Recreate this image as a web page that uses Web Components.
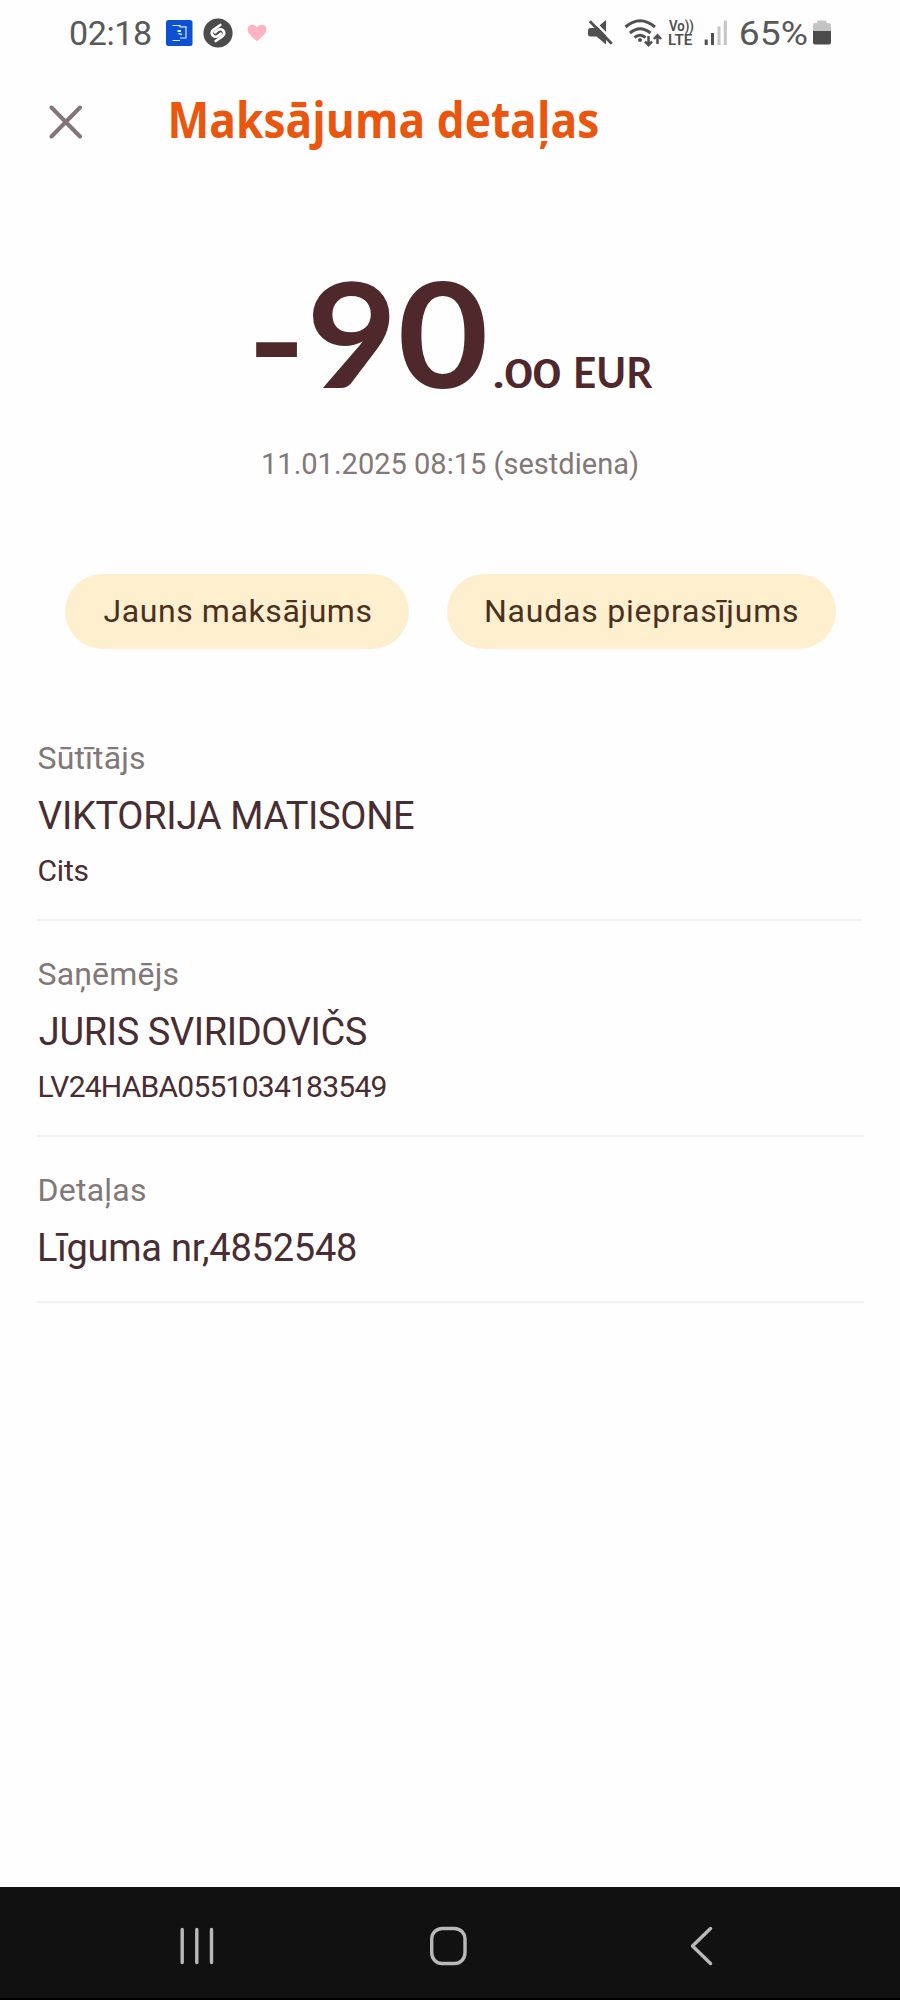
<!DOCTYPE html>
<html lang="lv">
<head>
<meta charset="utf-8">
<title>Maksājuma detaļas</title>
<style>
html,body{margin:0;padding:0;background:#fefefe}
body{width:900px;height:2000px;overflow:hidden;font-family:Roboto,"Noto Sans",sans-serif}
</style>
</head>
<body>
<payment-screen></payment-screen>
<script>
const ctx = document.createElement('canvas').getContext('2d');
const define = (name, html, setup) => customElements.define(name, class extends HTMLElement {
  connectedCallback() {
    if (this.shadowRoot) return;
    const t = document.createElement('template');
    t.innerHTML = html;
    this.attachShadow({mode:'open'}).append(t.content.cloneNode(true));
    if (setup) setup.call(this);
  }
});

// A line of text whose visible width equals the "w" attribute: with "stretch"
// the glyphs are scaled, otherwise letter spacing is used. "dx", "dy" nudge it.
define('fit-text', `<style>
:host{display:block;flex:none;white-space:pre}
span{display:inline-block;transform-origin:0 0;line-height:inherit}
</style><span><slot></slot></span>`, function () {
  const num = (n, d) => +(this.getAttribute(n) || d);
  const size = num('size'), w = num('w'), weight = num('weight', 400), dx = num('dx', 0), dy = num('dy', 0);
  const face = this.getAttribute('face') || 'Roboto';
  const stack = `"${face}","Noto Sans",sans-serif`;
  Object.assign(this.style, {width:w+'px', height:size+'px', lineHeight:size+'px', fontSize:size+'px', fontWeight:weight, fontFamily:stack});
  ctx.font = `${weight} ${size}px ${stack}`;
  const text = this.textContent, m = ctx.measureText(text);
  const ink = m.actualBoundingBoxLeft + m.actualBoundingBoxRight;
  const span = this.shadowRoot.querySelector('span');
  let k = 1;
  if (this.hasAttribute('stretch')) k = w / ink;
  else span.style.letterSpacing = (w - ink) / (text.length - 1) + 'px';
  span.style.transform = `translate(${m.actualBoundingBoxLeft*k + dx}px, ${dy}px) scaleX(${k})`;
});

define('status-bar', `<style>
:host{display:flex;height:66px;box-sizing:border-box;padding:0 69px 0 70px;align-items:center;color:#595959}
svg{display:block;flex:none}
.sp{flex:1}
.lte{display:grid;width:25px;margin:0 10px 0 7px;color:#505050;row-gap:0}
</style>
<fit-text size="34" w="81">02:18</fit-text>
<svg style="margin-left:9px" width="115" height="42" viewBox="160 12 115 42">
 <rect x="166" y="20" width="26.5" height="26" rx="2.5" fill="#0c50d4"/>
 <path d="M172.5 25.500h7.500v1.300h6V38h-6M172.500 40.500h7.500" fill="none" stroke="#dbeaff" stroke-width="1.200"/>
 <path d="M177.500 31h3.500M178.500 33.500l3.500 1" fill="none" stroke="#dbeaff" stroke-width="1.800"/>
 <circle cx="218" cy="33" r="14.600" fill="#4c4c4c"/>
 <path d="M220.300 25l-6.500 4.600c-4.600 3.800.2 9.400 4.500 6.100l2.500-2M215.700 41l6.500-4.600c4.600-3.800-.2-9.400-4.500-6.100l-2.500 2" fill="none" stroke="#fff" stroke-width="2.700" stroke-linecap="round"/>
 <path d="M257 41.300c-3.500-3.200-9.500-7.200-9.500-12 0-5.500 7-6.100 9.500-1.800 2.500-4.300 9.500-3.700 9.500 1.800 0 4.800-6 8.800-9.500 12z" fill="#ffb3c1"/>
</svg>
<div class="sp"></div>
<svg width="82" height="42" viewBox="580 12 82 42">
 <path d="M590.500 28h6l9.500-8v24.500l-9.500-8h-6q-2.500 0-2.500-2.500v-3.500q0-2.500 2.500-2.500z" fill="#505050"/>
 <path d="M591.500 18.800l22 22.500" stroke="#fefefe" stroke-width="2.400"/>
 <path d="M589.800 21.200l22 22.500" stroke="#505050" stroke-width="2.800"/>
 <g fill="none" stroke="#505050" stroke-width="3"><path d="M625.500 27q14.500-12.500 29.500 0M630 33q10-8.500 20.500 0M634.500 37.500q5.500-4.500 11 0"/></g>
 <circle cx="640" cy="40" r="2" fill="#505050"/>
 <path d="M648.500 36v9m-3.600-3.500l3.600 3.800 3.600-3.800M657.500 44v-8.500m-3.600 3.500l3.600-3.800 3.600 3.800" fill="none" stroke="#505050" stroke-width="2.500"/>
</svg>
<div class="lte"><fit-text stretch size="14" w="25" weight="600">Vo))</fit-text><fit-text stretch size="15" w="24" weight="600">LTE</fit-text></div>
<svg style="margin-right:14px" width="23" height="26" viewBox="704 20 23 26">
 <path d="M706.200 39.500V45M712.500 33V45" stroke="#505050" stroke-width="3"/>
 <path d="M719 26.500V45M725.300 20.500V45" stroke="#c5c5c5" stroke-width="3"/>
</svg>
<fit-text stretch size="34" w="66">65%</fit-text>
<svg style="margin-left:6px" width="18" height="26" viewBox="813 20 18 26">
 <path d="M814.500 23H817v-1q0-1.500 1.500-1.500h6.500q1.500 0 1.500 1.500v1h2.500q2 0 2 2v7h-18v-7q0-2 1.500-2z" fill="#c4c4c4"/>
 <path d="M813 31h18v11.500q0 2-2 2h-14q-2 0-2-2z" fill="#4c4c4c"/>
</svg>`);

define('screen-header', `<style>
:host{display:flex;height:104px;align-items:center;padding-left:49px;color:#ea560d}
svg{display:block;margin:8px 87px 0 0}
</style>
<svg width="34" height="34" viewBox="0 0 34 34"><path d="M2.500 2.500l28.500 29M31 2.500l-28.500 29" fill="none" stroke="#84747a" stroke-width="4" stroke-linecap="round"/></svg>
<fit-text stretch size="51" w="427" dx="1" weight="700" face="Open Sans">Maksājuma detaļas</fit-text>`);

define('payment-amount', `<style>
:host{display:flex;flex-direction:column;padding-top:89.500px}
.sum{display:flex;align-items:baseline;padding-left:256px;color:#4f282c}
.date{display:block;margin:45px 0 0 262px;color:#827878}
</style>
<div class="sum"><fit-text stretch size="144" w="41.500" dy="5" weight="700" face="Lato" style="margin-right:15.500px">-</fit-text><fit-text stretch size="145" w="172" weight="700" face="Lato" style="margin-right:9px">90</fit-text><fit-text stretch size="41" w="66" weight="700" face="Lato" style="margin-right:15.500px">.00</fit-text><fit-text stretch size="41.500" w="76.500" weight="700" face="Lato">EUR</fit-text></div>
<fit-text class="date" size="29" w="375" dx="1">11.01.2025 08:15 (sestdiena)</fit-text>`);

define('pill-button', `<style>
:host{display:flex;height:75px;border-radius:38px;background:#feefcf;color:#4c3020;align-items:center;justify-content:center;flex:none}
</style><slot></slot>`);

define('detail-field', `<style>
:host{display:block;margin:0 36px 0 37px;padding:37px 0 33px 1px;border-bottom:2px solid #f2f2f2;color:#482d32}
::slotted([slot=label]){color:#827878;margin-bottom:22.500px}
::slotted([slot=note]){margin-top:21.500px}
</style><slot name="label"></slot><slot></slot><slot name="note"></slot>`);

define('nav-bar', `<style>
:host{display:flex;height:113px;box-sizing:border-box;background:#111;border-bottom:2px solid #000;margin-top:auto;align-items:center;padding:6px 0 0 178px}
svg{display:block;fill:none;stroke:#b9b9b9;stroke-width:3.400;stroke-linecap:round;stroke-linejoin:round}
</style>
<svg width="38" height="42" viewBox="0 0 38 42"><path d="M4.200 4.500v33M18.800 4.500v33M33.500 4.500v33"/></svg>
<svg style="margin-left:212px" width="40" height="42" viewBox="0 0 40 42"><rect x="3.700" y="3.500" width="33.300" height="35" rx="10.500"/></svg>
<svg style="margin-left:220px" width="28" height="42" viewBox="0 0 28 42"><path d="M22.500 3.500L4.500 21l18 17.500"/></svg>`);

define('payment-screen', `<style>
:host{display:flex;flex-direction:column;height:2000px;width:900px;background:#fefefe}
.actions{display:flex;gap:38px;margin:95px 0 56.500px 65px}
</style>
<status-bar></status-bar>
<screen-header></screen-header>
<payment-amount></payment-amount>
<div class="actions">
 <pill-button style="width:344px"><fit-text size="32" w="267">Jauns maksājums</fit-text></pill-button>
 <pill-button style="width:389px"><fit-text size="32" w="311">Naudas pieprasījums</fit-text></pill-button>
</div>
<detail-field style="margin-right:38px">
 <fit-text slot="label" size="32" w="105.500" dx=".5">Sūtītājs</fit-text>
 <fit-text size="38" w="376">VIKTORIJA MATISONE</fit-text>
 <fit-text slot="note" size="30" w="49" dx=".5">Cits</fit-text>
</detail-field>
<detail-field>
 <fit-text slot="label" size="32" w="139" dx=".5">Saņēmējs</fit-text>
 <fit-text size="38" w="328" dx=".8">JURIS SVIRIDOVIČS</fit-text>
 <fit-text slot="note" size="30" w="346" dx="1.500">LV24HABA0551034183549</fit-text>
</detail-field>
<detail-field style="padding-bottom:34.500px">
 <fit-text slot="label" size="32" w="105.500" dx="1.500">Detaļas</fit-text>
 <fit-text size="38" w="316" dx="2">Līguma nr,4852548</fit-text>
</detail-field>
<nav-bar></nav-bar>`);
</script>
</body>
</html>
